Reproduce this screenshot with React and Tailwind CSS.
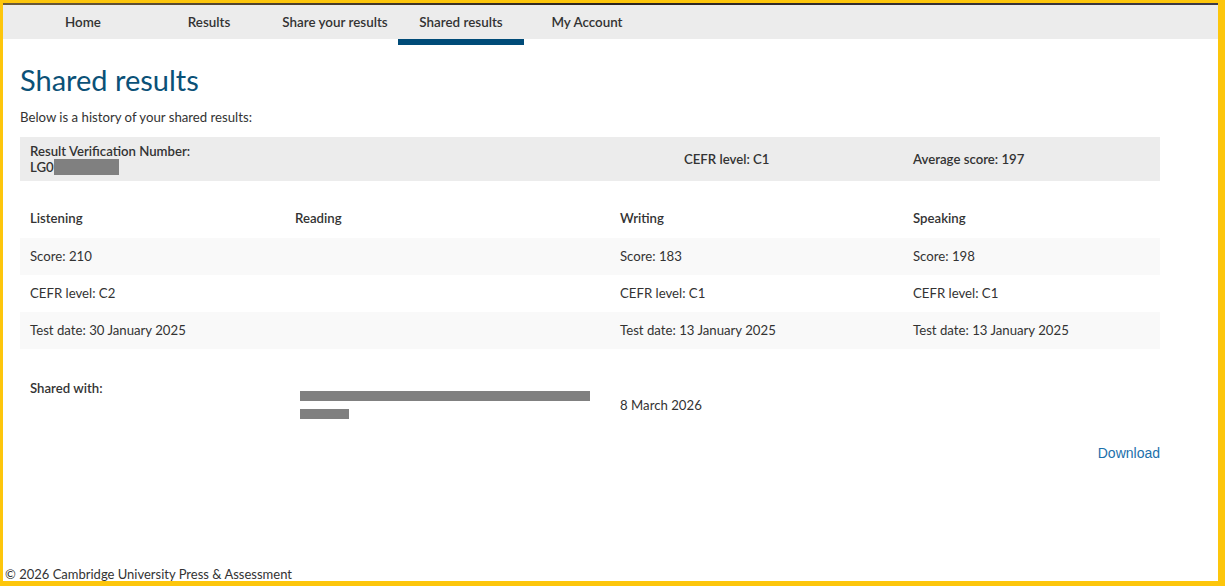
import React from 'react';

const tabs = ['Home', 'Results', 'Share your results', 'Shared results', 'My Account'];

const rows = [
  ['Score: 210', '', 'Score: 183', 'Score: 198'],
  ['CEFR level: C2', '', 'CEFR level: C1', 'CEFR level: C1'],
  ['Test date: 30 January 2025', '', 'Test date: 13 January 2025', 'Test date: 13 January 2025'],
];

const cols = 'grid grid-cols-[265px_325px_293px_257px]';

export default function App() {
  return (
    <div className="w-[1225px] h-[586px] overflow-hidden bg-white border-t-[3px] border-l-[3px] border-r-[7px] border-b-[5px] border-[#fdc60c] flex flex-col text-[#333] font-['Lato',sans-serif]">
      <div className="h-[2px] shrink-0 bg-gradient-to-r from-[#6b5a3a] via-[#2a2320] to-[#3c3a48]" />

      {/* top nav */}
      <nav className="h-[34px] shrink-0 bg-[#ececec] pl-[17px] flex">
        {tabs.map((t) => (
          <div key={t} className="relative w-[126px] flex items-center justify-center text-[13.4px] font-semibold">
            {t}
            {t === 'Shared results' && (
              <span className="absolute left-0 right-0 top-full h-[6px] bg-[#004b78]" />
            )}
          </div>
        ))}
      </nav>

      <main className="flex-1 pl-[17px] text-[13.2px]">
        <h1 className="mt-[23px] text-[29px] leading-[36px] text-[#0b5177]">Shared results</h1>
        <p className="mt-[9px] leading-[20px]">Below is a history of your shared results:</p>

        {/* summary bar */}
        <div className="mt-[10px] w-[1140px] bg-[#ececec] py-[6px] grid grid-cols-[654px_229px_257px] items-center leading-[16px] font-semibold">
          <div className="pl-[10px]">
            <div>Result Verification Number:</div>
            <div className="flex items-center">
              LG0<span className="inline-block w-[65px] h-[16px] bg-[#808080]" />
            </div>
          </div>
          <div className="pl-[10px]">CEFR level: C1</div>
          <div className="pl-[10px]">Average score: 197</div>
        </div>

        {/* skills table */}
        <div className="mt-[19px] w-[1140px]">
          <div className={`${cols} h-[38px] items-center font-semibold`}>
            <div className="pl-[10px]">Listening</div>
            <div className="pl-[10px]">Reading</div>
            <div className="pl-[10px]">Writing</div>
            <div className="pl-[10px]">Speaking</div>
          </div>
          {rows.map((r, i) => (
            <div key={i} className={`${cols} h-[37px] items-center ${i % 2 === 0 ? 'bg-[#f9f9f9]' : 'bg-white'}`}>
              {r.map((c, j) => (
                <div key={j} className="pl-[10px]">{c}</div>
              ))}
            </div>
          ))}

          {/* shared with */}
          <div className={`${cols} mt-[20px] h-[72px] leading-[18px]`}>
            <div className="pl-[10px] pt-[10px] font-semibold">Shared with:</div>
            <div className="pl-[15px] self-center flex flex-col">
              <div className="h-[18px] flex items-center"><span className="w-[290px] h-[10px] bg-[#808080]" /></div>
              <div className="h-[18px] flex items-center"><span className="w-[49px] h-[10px] bg-[#808080]" /></div>
            </div>
            <div className="pl-[10px] self-center">8 March 2026</div>
            <div />
          </div>

          <div className="mt-[2px] text-right leading-[20px]">
            <a href="#" className="text-[#1c70ab] text-[14px] font-['Liberation_Sans',Arial,sans-serif]">Download</a>
          </div>
        </div>
      </main>

      <footer className="h-[17px] shrink-0 pl-[2px] text-[13px] leading-[20px] whitespace-nowrap">
        © 2026 Cambridge University Press &amp; Assessment
      </footer>
    </div>
  );
}
